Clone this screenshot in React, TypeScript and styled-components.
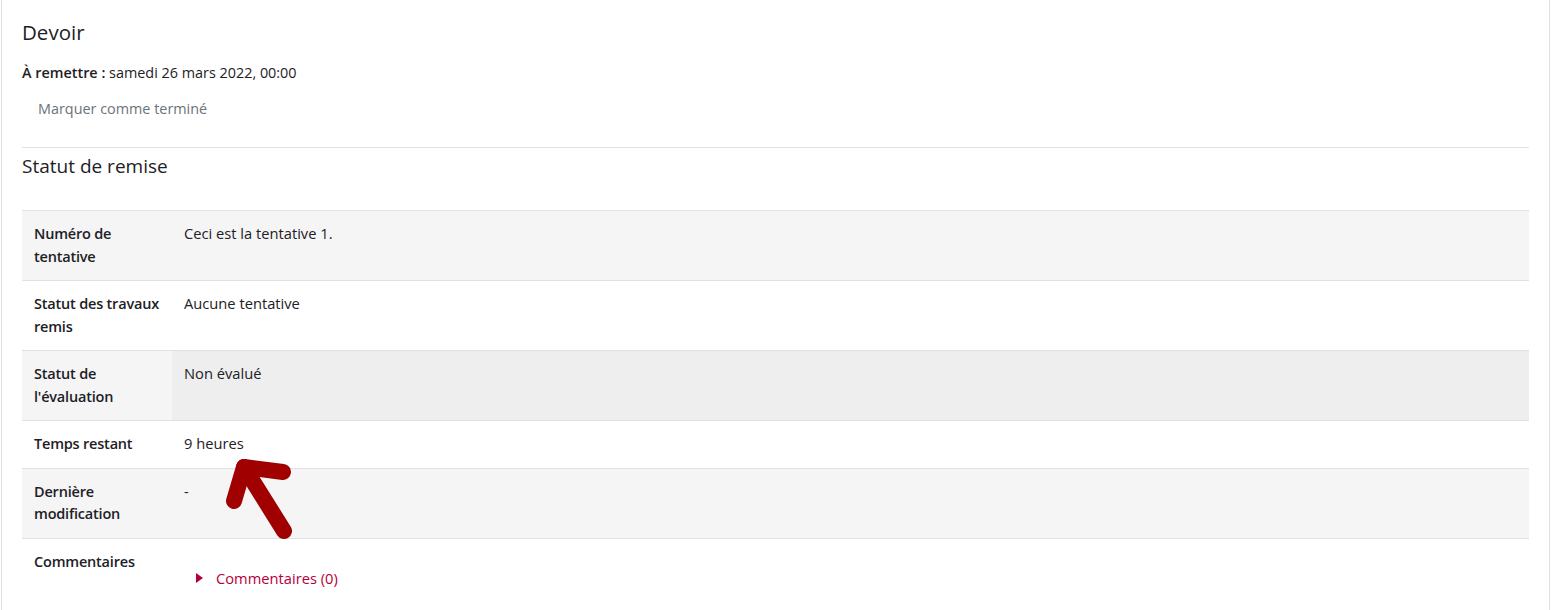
import React from "react";
import styled, { createGlobalStyle } from "styled-components";

const GlobalStyle = createGlobalStyle`
  html, body { margin: 0; padding: 0; background: #ffffff; }
  body {
    font-family: "Open Sans", "Noto Sans", "DejaVu Sans", sans-serif;
    font-size: 15px;
    line-height: 1.5;
    color: #1d2125;
  }
  * { box-sizing: border-box; }
`;

const Page = styled.div`
  position: relative;
  padding: 0 1px;
  min-height: 610px;
`;

const Card = styled.section`
  border-left: 1px solid #dee2e6;
  border-right: 1px solid #dee2e6;
  padding: 20px 20px 0;
  min-height: 610px;
`;

const Title = styled.h2`
  margin: 0 0 17px;
  font-size: 20.5px;
  font-weight: 400;
  line-height: 1.2;
`;

const DueLine = styled.div`
  margin: 0;
  font-size: 14.4px;
  line-height: 22.5px;
  strong { font-weight: 600; }
`;

const MarkButton = styled.button`
  display: inline-block;
  margin-top: 8px;
  padding: 6px 16px;
  border: none;
  background: transparent;
  font: inherit;
  font-size: 14.4px;
  color: #6a737b;
  line-height: 22.5px;
`;

const Divider = styled.hr`
  margin: 20px 0 0;
  border: 0;
  border-top: 1px solid #dee2e6;
`;

const SectionTitle = styled.h3`
  margin: 7px 0 33px;
  font-size: 19px;
  font-weight: 400;
  line-height: 1.2;
`;

const Table = styled.table`
  width: 100%;
  border-collapse: collapse;
  table-layout: fixed;
`;

const Row = styled.tr<{ $striped?: boolean }>`
  background: ${(p) => (p.$striped ? "#f5f5f5" : "#ffffff")};
  border-top: 1px solid #dee2e6;
`;

const HeadCell = styled.th`
  width: 150px;
  padding: 12px;
  text-align: left;
  vertical-align: top;
  font-weight: 600;
  font-size: 14.5px;
  letter-spacing: -0.2px;
  line-height: 22.5px;
  white-space: nowrap;
`;

const Cell = styled.td<{ $shaded?: boolean }>`
  padding: 11px 12px 13px;
  vertical-align: top;
  line-height: 22.5px;
  font-size: 14.7px;
  background: ${(p) => (p.$shaded ? "#eeeeee" : "transparent")};
`;

const CommentLink = styled.a`
  display: inline-flex;
  align-items: center;
  margin: 17px 0 0 12px;
  color: #b3003c;
  text-decoration: none;
`;

const Caret = styled.span`
  width: 0;
  height: 0;
  border-top: 5px solid transparent;
  border-bottom: 5px solid transparent;
  border-left: 7px solid #b3003c;
  margin-right: 13px;
`;

const Arrow = styled.svg`
  position: absolute;
  left: 0;
  top: 0;
  pointer-events: none;
`;

type RowData = {
  head: React.ReactNode;
  value: React.ReactNode;
  striped?: boolean;
  shaded?: boolean;
};

const rows: RowData[] = [
  { head: <>Numéro de<br />tentative</>, value: "Ceci est la tentative 1.", striped: true },
  { head: <>Statut des travaux<br />remis</>, value: "Aucune tentative" },
  { head: <>Statut de<br />l'évaluation</>, value: "Non évalué", striped: true, shaded: true },
  { head: "Temps restant", value: "9 heures" },
  { head: <>Dernière<br />modification</>, value: "-", striped: true },
  {
    head: "Commentaires",
    value: (
      <CommentLink href="#">
        <Caret />
        Commentaires (0)
      </CommentLink>
    ),
  },
];

export default function App() {
  return (
    <Page>
      <GlobalStyle />
      <Card>
        <Title>Devoir</Title>
        <DueLine>
          <strong>À remettre :</strong> samedi 26 mars 2022, 00:00
        </DueLine>
        <MarkButton type="button">Marquer comme terminé</MarkButton>
        <Divider />
        <SectionTitle>Statut de remise</SectionTitle>
        <Table>
          <tbody>
            {rows.map((r, i) => (
              <Row key={i} $striped={r.striped}>
                <HeadCell>{r.head}</HeadCell>
                <Cell $shaded={r.shaded}>{r.value}</Cell>
              </Row>
            ))}
          </tbody>
        </Table>
      </Card>
      <Arrow width="400" height="610" viewBox="0 0 400 610">
        <g fill="none" stroke="#a00000" strokeWidth="16" strokeLinecap="round" strokeLinejoin="round">
          <path d="M284 531 L244 467" />
          <path d="M234 501 L244 467 L283 472" />
        </g>
      </Arrow>
    </Page>
  );
}
